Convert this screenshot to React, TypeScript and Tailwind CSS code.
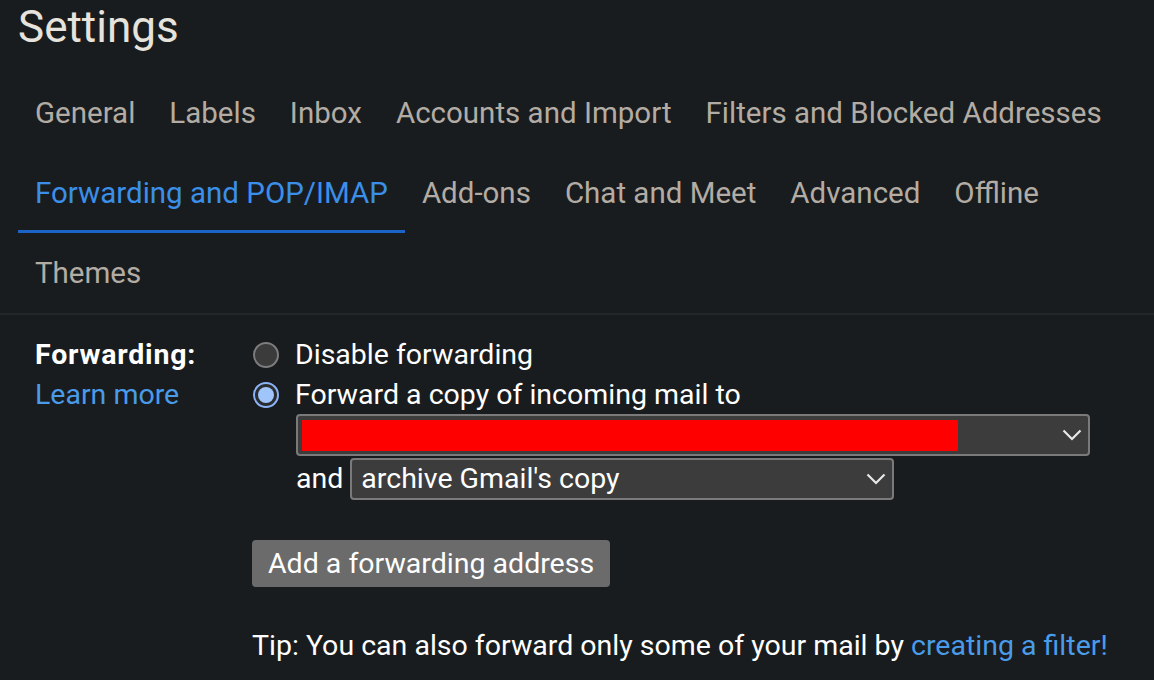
import React from "react";

const rows = [
  ["General", "Labels", "Inbox", "Accounts and Import", "Filters and Blocked Addresses"],
  ["Forwarding and POP/IMAP", "Add-ons", "Chat and Meet", "Advanced", "Offline"],
  ["Themes"],
];

function Chevron() {
  return (
    <svg width="20" height="12" viewBox="0 0 20 12" className="shrink-0">
      <path d="M1.5 1.5 L10 10 L18.5 1.5" fill="none" stroke="#e8e8e8" strokeWidth="2.2" />
    </svg>
  );
}

function Radio({ checked }: { checked?: boolean }) {
  if (checked) {
    return (
      <span className="w-[26px] h-[26px] rounded-full border-2 border-[#8ab4f8] bg-[#2a2c2e] flex items-center justify-center shrink-0">
        <span className="w-[16px] h-[16px] rounded-full bg-[#9fc5fb]" />
      </span>
    );
  }
  return <span className="w-[26px] h-[26px] rounded-full border-2 border-[#7d7d7d] bg-[#3b3b3b] shrink-0" />;
}

export default function App() {
  return (
    <div
      className="w-[1154px] h-[680px] overflow-hidden bg-[#191c1e] text-white"
      style={{ fontFamily: "Roboto, 'Noto Sans', sans-serif" }}
    >
      {/* Title */}
      <div className="h-[73px] pl-[18px] pt-[1px] text-[44px] leading-[52px] text-[#e6e2dc]">Settings</div>

      {/* Tabs */}
      <div className="border-b-2 border-[#24272a]">
        {rows.map((row, i) => (
          <div key={i} className="flex pl-[18px] h-[80px]">
            {row.map((tab) => {
              const active = tab === "Forwarding and POP/IMAP";
              return (
                <div
                  key={tab}
                  className={`px-[17px] flex items-center text-[29.5px] whitespace-nowrap border-b-[3px] ${
                    active ? "text-[#3b8fe9] border-[#1b63c6]" : "text-[#b3aca4] border-transparent"
                  }`}
                >
                  <span className="mt-[3px]">{tab}</span>
                </div>
              );
            })}
          </div>
        ))}
      </div>

      {/* Forwarding section */}
      <div className="flex pt-[20px] text-[28.5px] leading-[40px]">
        <div className="w-[253px] pl-[35px]">
          <div className="font-bold tracking-[0.8px]">Forwarding:</div>
          <div className="text-[#4a9be8]">Learn more</div>
        </div>
        <div className="flex flex-col">
          <div className="flex items-center gap-[16px]">
            <Radio />
            <span>Disable forwarding</span>
          </div>
          <div className="flex items-center gap-[16px]">
            <Radio checked />
            <span>Forward a copy of incoming mail to</span>
          </div>
          <div className="pl-[43px]">
            <div className="w-[794px] h-[42px] -mt-[1px] border-2 border-[#7a7a7a] rounded-[4px] bg-[#3c3c3c] flex items-center pl-[4px] pr-[6px]">
              <div className="w-[656px] h-[31px] bg-[#ff0000]" />
              <div className="flex-1" />
              <Chevron />
            </div>
            <div className="flex items-center mt-[2px]">
              <span>and</span>
              <div className="ml-[7px] w-[544px] h-[42px] border-2 border-[#7a7a7a] rounded-[4px] bg-[#3c3c3c] flex items-center pl-[9px] pr-[6px]">
                <span className="flex-1">archive Gmail's copy</span>
                <Chevron />
              </div>
            </div>
          </div>
          <div className="mt-[40px] -ml-[1px]">
            <button className="h-[47px] px-[16px] rounded-[4px] bg-[#6b6b6b] text-white text-[28.5px] leading-[40px]">
              Add a forwarding address
            </button>
          </div>
          <div className="mt-[39px] -ml-[1px] whitespace-nowrap">
            Tip: You can also forward only some of your mail by{" "}
            <span className="text-[#4a9be8]">creating a filter!</span>
          </div>
        </div>
      </div>
    </div>
  );
}
